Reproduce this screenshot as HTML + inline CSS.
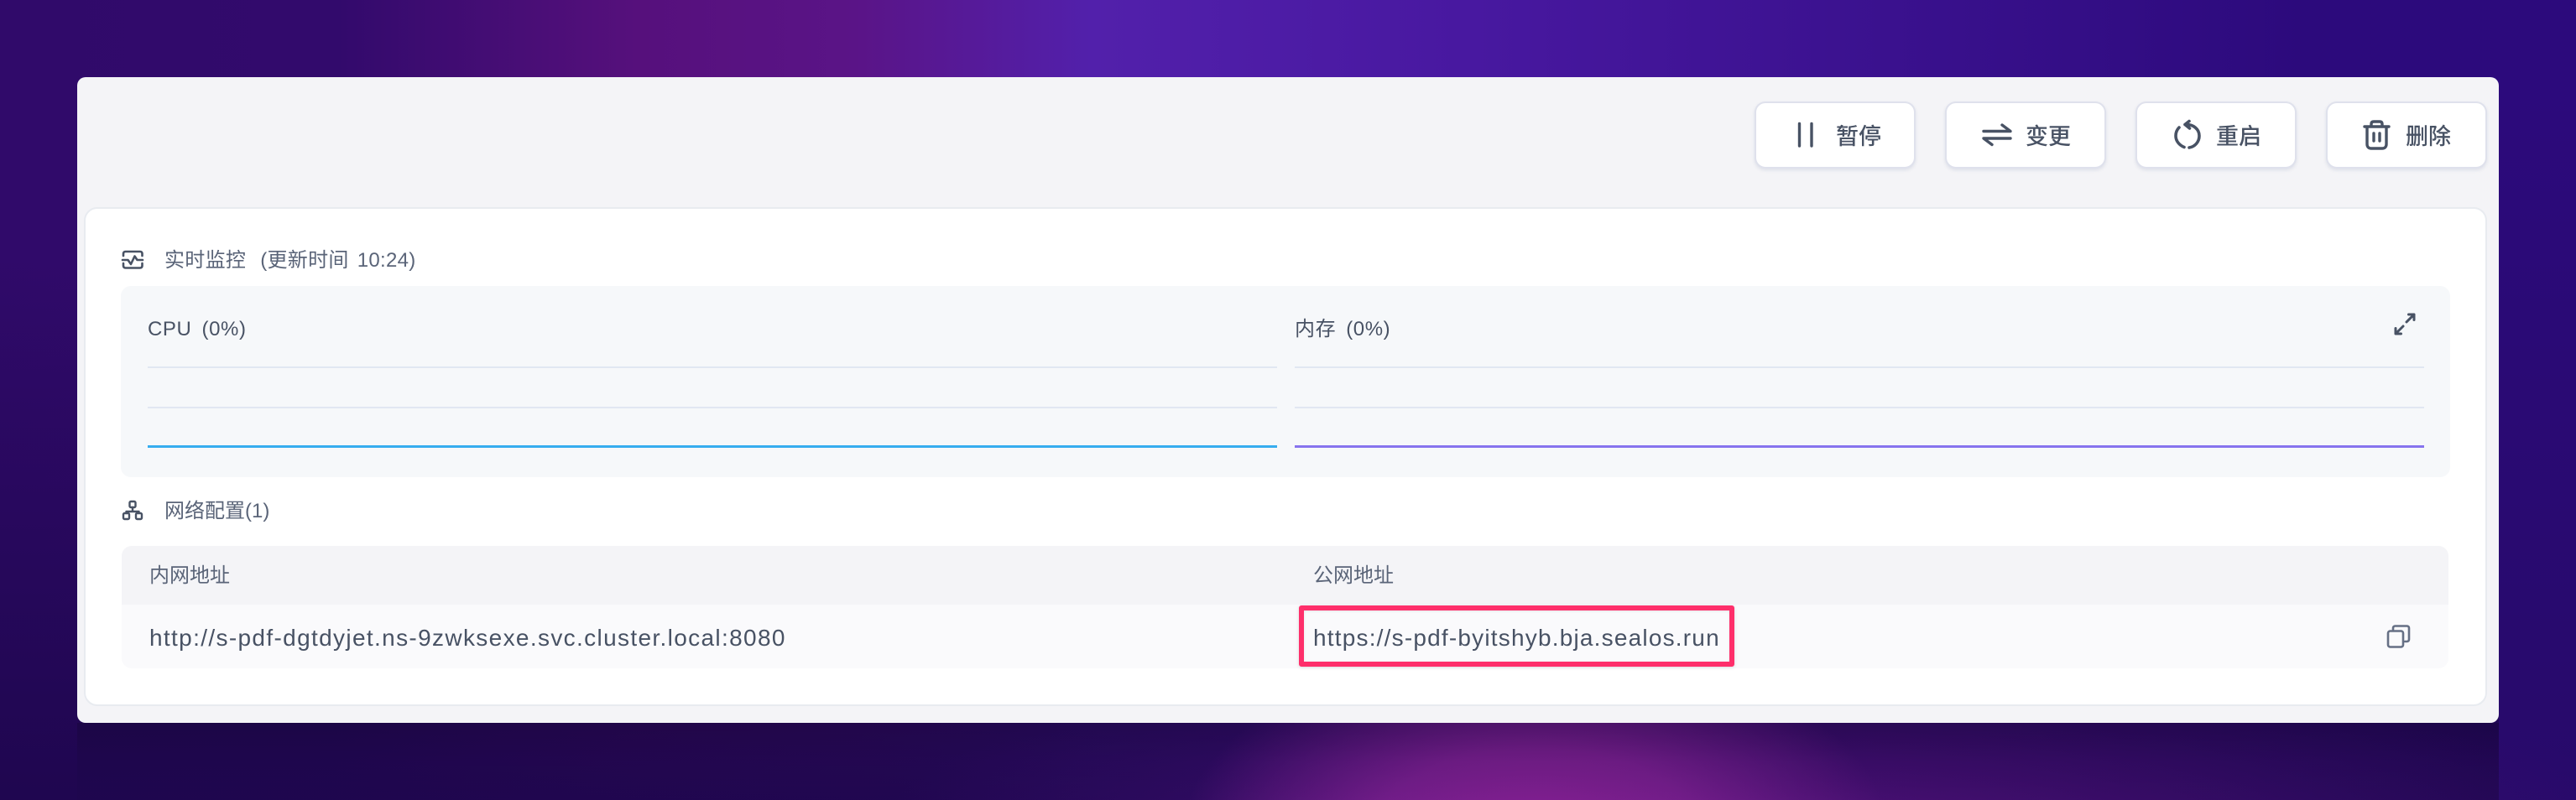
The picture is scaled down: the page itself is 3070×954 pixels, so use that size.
<!DOCTYPE html>
<html lang="zh">
<head>
<meta charset="utf-8">
<title>Monitor</title>
<style>
html,body{margin:0;padding:0;width:3070px;height:954px;overflow:hidden;background:#1d0545;}
body{position:relative;font-family:"Liberation Sans","Noto Sans CJK SC",sans-serif;color:#485264;}
div{position:absolute;box-sizing:border-box;}
.t{white-space:nowrap;line-height:40px;height:40px;}
.btn{top:121px;width:192px;height:80px;background:#fff;border:2px solid #dfe1ec;border-radius:13px;box-shadow:0 2px 4px rgba(19,51,107,.1);}
.bt{font-size:27px;top:143px;color:#485264;font-weight:500;}
.ln{height:2px;background:#e1e7f2;}
</style>
</head>
<body>
<div style="left:0;top:0;width:3070px;height:954px;background:
linear-gradient(90deg,rgba(48,10,106,1) 0,rgba(50,10,108,1) 400px,rgba(86,16,124,1) 760px,rgba(90,20,135,1) 1020px,rgba(82,32,171,1) 1300px,rgba(72,24,160,1) 1750px,rgba(44,10,124,1) 2750px,rgba(44,10,124,1) 3070px);"></div>
<div style="left:0;top:300px;width:3070px;height:654px;background:linear-gradient(180deg,rgba(29,5,69,0) 0,rgba(30,6,78,1) 100%);opacity:.95;"></div>
<div style="left:2978px;top:100px;width:92px;height:854px;background:linear-gradient(180deg,rgba(44,10,124,1) 0,rgba(39,10,106,1) 100%);"></div>
<div style="left:0;top:862px;width:3070px;height:92px;background:
radial-gradient(ellipse 420px 220px at 1830px 130px,rgba(135,32,148,1) 0%,rgba(118,30,140,.95) 45%,rgba(100,25,130,.6) 75%,rgba(80,20,120,0) 100%),
radial-gradient(ellipse 1050px 230px at 2100px 130px,rgba(85,18,125,.9) 0%,rgba(60,14,110,.5) 65%,rgba(48,12,110,0) 100%);"></div>
<!-- shadow below card, clipped to card width -->
<div style="left:92px;top:862px;width:2886px;height:92px;background:linear-gradient(180deg,rgba(8,0,24,.22) 0,rgba(8,0,24,.08) 50%,rgba(8,0,24,.02) 100%);"></div>

<!-- card -->
<div style="left:92px;top:92px;width:2886px;height:770px;background:#f4f4f7;border-radius:10px;"></div>

<!-- buttons -->
<div class="btn" style="left:2091px;"></div>
<div class="btn" style="left:2318px;"></div>
<div class="btn" style="left:2545px;"></div>
<div class="btn" style="left:2772px;"></div>
<div class="t bt" style="left:2188px;">暂停</div>
<div class="t bt" style="left:2414px;">变更</div>
<div class="t bt" style="left:2641px;">重启</div>
<div class="t bt" style="left:2867px;">删除</div>

<!-- inner panel -->
<div style="left:100px;top:247px;width:2864px;height:595px;background:#fff;border:2px solid #e8ebf0;border-radius:16px;"></div>

<!-- monitor -->
<div class="t" style="left:196px;top:291px;font-size:24px;color:#5a6478;letter-spacing:.3px;">实时监控<span style="margin-left:17px;">(更新时间</span><span style="margin-left:10px;">10:24)</span></div>
<div style="left:144px;top:341px;width:2776px;height:228px;background:#f6f8fa;border-radius:12px;"></div>
<div class="t" style="left:176px;top:373px;font-size:24px;letter-spacing:.6px;">CPU<span style="margin-left:12px;">(0%)</span></div>
<div class="t" style="left:1543px;top:373px;font-size:24px;letter-spacing:.6px;">内存<span style="margin-left:12px;">(0%)</span></div>
<div class="ln" style="left:176px;top:437px;width:1346px;"></div>
<div class="ln" style="left:176px;top:485px;width:1346px;"></div>
<div class="ln" style="left:1543px;top:437px;width:1346px;"></div>
<div class="ln" style="left:1543px;top:485px;width:1346px;"></div>
<div style="left:176px;top:531px;width:1346px;height:3px;background:#36adef;"></div>
<div style="left:1543px;top:531px;width:1346px;height:3px;background:#8774ee;"></div>

<!-- network -->
<div class="t" style="left:196px;top:590px;font-size:24px;color:#5a6478;">网络配置(1)</div>
<div style="left:145px;top:651px;width:2773px;height:146px;background:#fafafc;border-radius:12px;overflow:hidden;">
  <div style="left:0;top:0;width:2773px;height:70px;background:#f4f4f7;"></div>
</div>
<div class="t" style="left:178px;top:667px;font-size:24px;color:#5a6478;">内网地址</div>
<div class="t" style="left:1565px;top:667px;font-size:24px;color:#5a6478;">公网地址</div>
<div class="t" style="left:178px;top:741px;font-size:28px;letter-spacing:1.35px;">http://s-pdf-dgtdyjet.ns-9zwksexe.svc.cluster.local:8080</div>
<div class="t" style="left:1565px;top:741px;font-size:28px;letter-spacing:1.2px;">https://s-pdf-byitshyb.bja.sealos.run</div>
<div style="left:1548px;top:722px;width:519px;height:73px;border:6px solid #fe2f6b;border-radius:3px;box-shadow:0 1px 4px rgba(0,0,0,.12),inset 0 1px 3px rgba(0,0,0,.08);"></div>

<!-- icons -->
<svg style="position:absolute;left:0;top:0;" width="3070" height="954" viewBox="0 0 3070 954" fill="none" stroke="#485264" stroke-width="3.4" stroke-linecap="round" stroke-linejoin="round">
  <!-- pause -->
  <path d="M2144.500 147.500V174M2159 147.500V174"/>
  <!-- swap -->
  <path d="M2364 156.500H2396L2386 149M2396 165H2364L2374 172.500"/>
  <!-- restart -->
  <path d="M2604 148.500L2609 144.500M2604 148.500L2609.500 153M2604 148.500C2614 148 2621 154 2621 162C2621 169 2616 175 2609 176M2597 152C2594 155 2593 158 2593 162C2593 168 2597 173 2603 175.500" stroke-width="3.6"/>
  <!-- trash -->
  <path d="M2818 151H2847M2826 151V148C2826 146 2827 145 2829 145H2836C2838 145 2839 146 2839 148V151M2821 151V172C2821 175 2823 177 2826 177H2839C2842 177 2844 175 2844 172V151M2829 159V168M2836 159V168"/>
  <!-- expand -->
  <path d="M2868 384L2877 375M2870.500 375H2877V381.500M2864 389L2855 398M2855 391.500V398H2861.500" stroke-width="3"/>
  <!-- copy -->
  <g stroke="#667085" stroke-width="2.6">
    <rect x="2846" y="752.500" width="18" height="19" rx="2.500"/>
    <path d="M2852 751V749C2852 747.500 2853 746.500 2854.500 746.500H2868.500C2870 746.500 2871 747.500 2871 749V762.500C2871 764 2870 765 2868.500 765H2866"/>
  </g>
  <!-- monitor -->
  <g stroke-width="2.6">
    <path d="M147 305V302.500C147 301 148 300 149.500 300H167C168.500 300 169.500 301 169.500 302.500V305M147 314V317C147 318.500 148 319.500 149.500 319.500H167C168.500 319.500 169.500 318.500 169.500 317V314"/>
    <path d="M146 310H152.500L156 315L160.500 305.500L163.500 310H170"/>
  </g>
  <!-- network -->
  <g stroke-width="2.4">
    <rect x="154.500" y="598" width="7" height="7" rx="1.500"/>
    <path d="M158 605V610M150.500 612V610H165.500V612"/>
    <rect x="147" y="612" width="7" height="7" rx="1.500"/>
    <rect x="162" y="612" width="7" height="7" rx="1.500"/>
  </g>
</svg>
</body>
</html>
